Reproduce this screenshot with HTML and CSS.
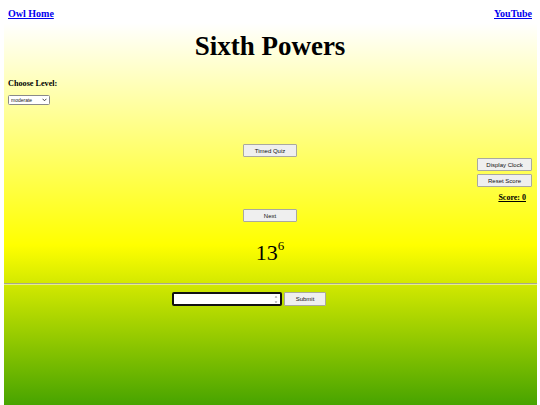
FILE: index.html
```html
<!DOCTYPE html>
<html lang="en">
<head>
    <meta charset="UTF-8">
    <meta name="viewport" content="width=device-width, initial-scale=1.0">
    <title>Sixth Powers</title>
    <link rel="stylesheet" href="styles.css">
</head>
<body>
    <nav class="top-links">
        <a href="#">Owl Home</a>
        <a href="#">YouTube</a>
    </nav>
    <h1>Sixth Powers</h1>
    <div class="level">
        <h3>Choose Level:</h3>
        <span class="select-box">
            <select id="level">
                <option>easy</option>
                <option selected>moderate</option>
                <option>hard</option>
            </select>
            <svg class="chevron" width="5" height="4" viewBox="0 0 5 4">
                <path d="M0.6 0.8 L2.5 2.8 L4.4 0.8" fill="none" stroke="#333" stroke-width="0.9"/>
            </svg>
        </span>
    </div>
    <div class="play">
        <div class="controls">
            <button id="timed">Timed Quiz</button>
            <button id="next" class="next">Next</button>
        </div>
        <div class="side">
            <button id="clock">Display Clock</button>
            <button id="reset">Reset Score</button>
            <div class="score">Score: 0</div>
        </div>
    </div>
    <div class="question">13<sup>6</sup></div>
    <hr>
    <div class="answer">
        <span class="answer-box">
            <input type="text" id="answer">
            <svg class="spin" width="4" height="9" viewBox="0 0 4 9">
                <path d="M0.6 2.6 L2 1 L3.4 2.6 Z" fill="#888"/>
                <path d="M0.6 6.4 L2 8 L3.4 6.4 Z" fill="#888"/>
            </svg>
        </span>
        <button id="submit" class="submit">Submit</button>
    </div>
</body>
</html>
```

FILE: styles.css
```css
html {
    background-color: #fff;
    overflow: hidden;
}
body {
    font-family: "Liberation Serif", "Times New Roman", serif;
    margin: 0 3.5px;
    padding: 0;
    height: 405px;
    background: linear-gradient(to bottom, #fff 23px, #ffff00 245px, #008000 467px);
}
.top-links {
    display: flex;
    justify-content: space-between;
    padding: 8px 4.5px 0;
    font-size: 10px;
    font-weight: bold;
    line-height: 12px;
}
.top-links a {
    color: #0000ee;
}
h1 {
    margin: 10px 0 0;
    font-size: 27px;
    line-height: 32px;
    text-align: center;
}
.level {
    padding: 0 4.5px;
    margin-top: 17px;
}
.level h3 {
    margin: 0;
    font-size: 8.2px;
    line-height: 10px;
}
.select-box {
    position: relative;
    display: block;
    width: 42px;
    margin-top: 6px;
}
.select-box select {
    display: block;
    appearance: none;
    box-sizing: border-box;
    width: 42px;
    height: 10px;
    padding: 0 0 0 2px;
    font-family: "Liberation Sans", Arial, sans-serif;
    font-size: 5px;
    color: #222;
    border: 1px solid #8a8a8a;
    border-radius: 1.5px;
    background-color: #fff;
}
.chevron {
    position: absolute;
    right: 3px;
    top: 3px;
}
.play {
    display: grid;
    grid-template-columns: 1fr 54px 1fr;
    padding: 0 4.5px;
    margin-top: 39px;
}
.controls {
    grid-column: 2;
    display: flex;
    flex-direction: column;
}
.side {
    grid-column: 3;
    justify-self: end;
    display: flex;
    flex-direction: column;
    align-items: flex-end;
    padding-top: 14px;
}
button {
    font-family: "Liberation Sans", Arial, sans-serif;
    font-size: 6px;
    color: #111;
    background-color: #efefef;
    border: 1px solid #a9a9a0;
    border-radius: 1px;
    height: 13px;
    padding: 0;
    cursor: pointer;
}
.controls button {
    width: 54px;
}
.controls .next {
    margin-top: 52px;
}
.side button {
    width: 55px;
    margin-bottom: 3px;
}
.score {
    margin-top: 3px;
    padding-right: 6px;
    font-size: 8px;
    font-weight: bold;
    line-height: 10px;
    text-decoration: underline;
}
.question {
    margin-top: 18px;
    text-align: center;
    font-size: 22px;
    line-height: 26px;
}
.question sup {
    font-size: 13px;
    line-height: 0;
    vertical-align: 10px;
}
hr {
    margin: 17px 0 0;
    border: 0;
    border-top: 1px solid #a8a888;
    border-bottom: 1px solid #e4ec90;
    height: 0;
}
.answer {
    display: flex;
    justify-content: center;
    align-items: flex-start;
    gap: 2px;
    margin-top: 7px;
    padding-right: 42px;
}
.answer-box {
    position: relative;
    display: flex;
}
.answer-box input {
    box-sizing: border-box;
    width: 110px;
    height: 14px;
    border: 2px solid #111;
    border-radius: 2px;
    padding: 0 2px;
    font-size: 8px;
    background-color: #fff;
}
.spin {
    position: absolute;
    right: 4px;
    top: 2.5px;
}
.submit {
    width: 42px;
    height: 14px;
}
```
